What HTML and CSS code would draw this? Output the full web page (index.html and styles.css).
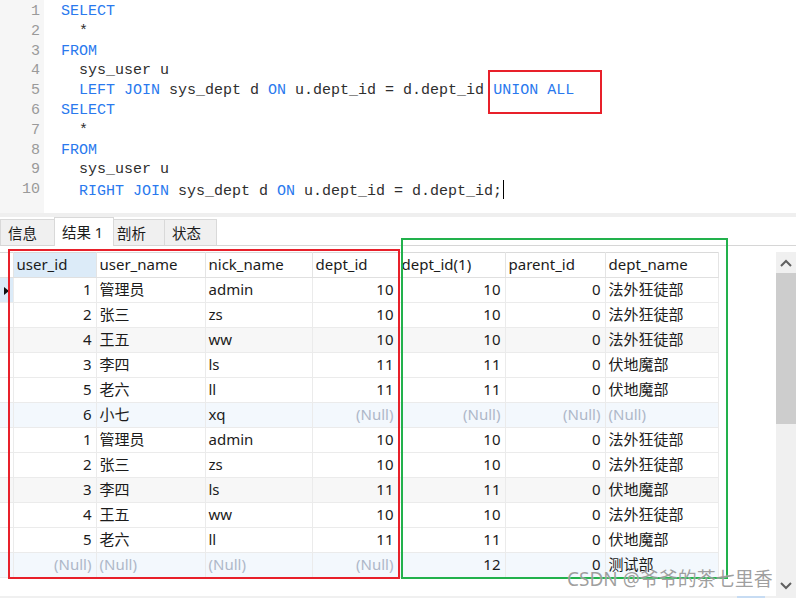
FILE: index.html
```html
<!DOCTYPE html>
<html lang="zh-CN">
<head>
<meta charset="utf-8">
<title>Query</title>
<link rel="stylesheet" href="styles.css">
</head>
<body>
<div class="app">
  <div class="editor">
    <div class="gutter">
      <div class="num">1</div><div class="num">2</div><div class="num">3</div><div class="num">4</div><div class="num">5</div>
      <div class="num">6</div><div class="num">7</div><div class="num">8</div><div class="num">9</div><div class="num">10</div>
    </div>
    <div class="code">
      <div class="ln"><span class="kw">SELECT</span></div>
      <div class="ln">  *</div>
      <div class="ln"><span class="kw">FROM</span></div>
      <div class="ln">  sys_user u</div>
      <div class="ln">  <span class="kw">LEFT JOIN</span> sys_dept d <span class="kw">ON</span> u.dept_id = d.dept_id <span class="kw">UNION ALL</span></div>
      <div class="ln"><span class="kw">SELECT</span></div>
      <div class="ln">  *</div>
      <div class="ln"><span class="kw">FROM</span></div>
      <div class="ln">  sys_user u</div>
      <div class="ln">  <span class="kw">RIGHT JOIN</span> sys_dept d <span class="kw">ON</span> u.dept_id = d.dept_id;<span class="caret"></span></div>
    </div>
  </div>
  <div class="band"></div>
  <div class="tabs">
    <div class="tab t1">信息</div>
    <div class="tab t2 active">结果 1</div>
    <div class="tab t3">剖析</div>
    <div class="tab t4">状态</div>
  </div>
  <div class="results">
    <div class="grid-wrap">
      <table class="grid">
        <colgroup>
          <col class="c-ind"><col class="c-uid"><col class="c-uname"><col class="c-nick"><col class="c-did"><col class="c-did1"><col class="c-pid"><col class="c-dname">
        </colgroup>
        <thead>
          <tr><th class="ind"></th><th class="sel">user_id</th><th>user_name</th><th>nick_name</th><th>dept_id</th><th>dept_id(1)</th><th>parent_id</th><th>dept_name</th></tr>
        </thead>
        <tbody>
          <tr><td class="ind cur"><span class="tri"></span></td><td class="n">1</td><td>管理员</td><td>admin</td><td class="n">10</td><td class="n">10</td><td class="n">0</td><td>法外狂徒部</td></tr>
          <tr><td class="ind"></td><td class="n">2</td><td>张三</td><td>zs</td><td class="n">10</td><td class="n">10</td><td class="n">0</td><td>法外狂徒部</td></tr>
          <tr class="grey"><td class="ind"></td><td class="n">4</td><td>王五</td><td>ww</td><td class="n">10</td><td class="n">10</td><td class="n">0</td><td>法外狂徒部</td></tr>
          <tr><td class="ind"></td><td class="n">3</td><td>李四</td><td>ls</td><td class="n">11</td><td class="n">11</td><td class="n">0</td><td>伏地魔部</td></tr>
          <tr><td class="ind"></td><td class="n">5</td><td>老六</td><td>ll</td><td class="n">11</td><td class="n">11</td><td class="n">0</td><td>伏地魔部</td></tr>
          <tr class="blue"><td class="ind"></td><td class="n">6</td><td>小七</td><td>xq</td><td class="n null">(Null)</td><td class="n null">(Null)</td><td class="n null">(Null)</td><td class="null">(Null)</td></tr>
          <tr><td class="ind"></td><td class="n">1</td><td>管理员</td><td>admin</td><td class="n">10</td><td class="n">10</td><td class="n">0</td><td>法外狂徒部</td></tr>
          <tr><td class="ind"></td><td class="n">2</td><td>张三</td><td>zs</td><td class="n">10</td><td class="n">10</td><td class="n">0</td><td>法外狂徒部</td></tr>
          <tr class="grey"><td class="ind"></td><td class="n">3</td><td>李四</td><td>ls</td><td class="n">11</td><td class="n">11</td><td class="n">0</td><td>伏地魔部</td></tr>
          <tr><td class="ind"></td><td class="n">4</td><td>王五</td><td>ww</td><td class="n">10</td><td class="n">10</td><td class="n">0</td><td>法外狂徒部</td></tr>
          <tr><td class="ind"></td><td class="n">5</td><td>老六</td><td>ll</td><td class="n">11</td><td class="n">11</td><td class="n">0</td><td>伏地魔部</td></tr>
          <tr class="blue"><td class="ind"></td><td class="n null">(Null)</td><td class="null">(Null)</td><td class="null">(Null)</td><td class="n null">(Null)</td><td class="n">12</td><td class="n">0</td><td>测试部</td></tr>
        </tbody>
      </table>
    </div>
    <div class="vscroll">
      <div class="sb-btn">
        <svg width="12" height="8" viewBox="0 0 12 8"><path d="M1 7 L6 2 L11 7" fill="none" stroke="#606060" stroke-width="2"/></svg>
      </div>
      <div class="sb-thumb"></div>
      <div class="sb-track"></div>
      <div class="sb-btn">
        <svg width="12" height="8" viewBox="0 0 12 8"><path d="M1 1 L6 6 L11 1" fill="none" stroke="#606060" stroke-width="2"/></svg>
      </div>
    </div>
  </div>
  <div class="hscroll"><div class="hs-thumb"></div></div>

  <div class="mark mark-union"></div>
  <div class="mark mark-left"></div>
  <div class="mark mark-right"></div>
  <div class="watermark">CSDN @爷爷的茶七里香</div>
</div>
</body>
</html>
```

FILE: styles.css
```css
* { box-sizing: border-box; }
html, body { margin: 0; padding: 0; background: #ffffff; }
.app {
  position: relative;
  width: 796px;
  height: 598px;
  overflow: hidden;
  display: flex;
  flex-direction: column;
  font-family: "Noto Sans", "Noto Sans CJK SC", sans-serif;
  color: #1b1b1b;
}

/* editor */
.editor {
  height: 213px;
  display: flex;
  flex-shrink: 0;
}
.gutter {
  width: 44px;
  background: #f6f6f6;
  padding-top: 2px;
  padding-right: 4px;
  text-align: right;
  font-family: "Liberation Mono", "DejaVu Sans Mono", monospace;
  font-size: 15px;
  color: #9a9a9a;
}
.num { height: 19.8px; line-height: 20px; }
.code {
  flex: 1;
  padding-top: 2px;
  padding-left: 17px;
  font-family: "Liberation Mono", "DejaVu Sans Mono", monospace;
  font-size: 15px;
  color: #2e2e2e;
}
.ln { height: 19.8px; line-height: 20px; white-space: pre; }
.kw { color: #2a79ee; }
.caret {
  display: inline-block;
  width: 1px;
  height: 19px;
  background: #000;
  vertical-align: -4px;
  margin-left: 1px;
}

.band { height: 4px; background: #efefef; flex-shrink: 0; }

/* tabs */
.tabs {
  height: 29px;
  display: flex;
  align-items: flex-end;
  border-bottom: 1px solid #d6d6d6;
  flex-shrink: 0;
  font-size: 14.5px;
}
.tab {
  height: 26px;
  line-height: 26px;
  background: #f0f0f0;
  border: 1px solid #d9d9d9;
  border-bottom: none;
  margin-right: -1px;
  padding-left: 7px;
  color: #1b1b1b;
}
.tab.active {
  height: 29px;
  line-height: 28px;
  background: #ffffff;
  margin-bottom: -1px;
  position: relative;
  padding-left: 7px;
}
.t1 { width: 55px; }
.t2 { width: 60px; }
.t3 { width: 52px; padding-left: 3px; }
.t4 { width: 53px; }

/* results */
.results {
  margin-top: 6px;
  height: 344px;
  display: flex;
  flex-shrink: 0;
}
.grid-wrap { width: 776px; overflow: hidden; }
.grid {
  width: 718px;
  table-layout: fixed;
  border-collapse: collapse;
  font-size: 15px;
}
.c-ind { width: 13px; }
.c-uid { width: 83px; }
.c-uname { width: 109px; }
.c-nick { width: 107px; }
.c-did { width: 86px; }
.c-did1 { width: 107px; }
.c-pid { width: 100px; }
.c-dname { width: 113px; }

.grid th, .grid td {
  height: 25px;
  padding: 0 3px 2px;
  line-height: 21px;
  border: 1px solid #ebebeb;
  white-space: nowrap;
  overflow: hidden;
  font-weight: normal;
  text-align: left;
}
.grid th {
  border-top: 1px solid #dadada;
  border-bottom: 1px solid #e0e0e0;
  border-right: 1px solid #e4e4e4;
}
.grid th.sel { background: #dcebf8; }
.grid .ind { padding: 0; border-left: none; }
.grid td.cur { background: #dcebf8; }
.tri {
  display: block;
  width: 0;
  height: 0;
  margin-left: 4px;
  margin-top: 1px;
  border-top: 4px solid transparent;
  border-bottom: 4px solid transparent;
  border-left: 5px solid #111;
}
.grid td.n { text-align: right; padding-right: 4px; }
.grid td.null { color: #aeb7c8; }
.grid tr.grey td { background: #f7f7f7; }
.grid tr.blue td { background: #f3f8fd; }

/* vertical scrollbar */
.vscroll {
  width: 20px;
  display: flex;
  flex-direction: column;
  background: #f0f0f0;
}
.sb-btn {
  height: 21px;
  display: flex;
  align-items: center;
  justify-content: center;
}
.sb-thumb { height: 151px; background: #cdcdcd; }
.sb-track { flex: 1; }

.hscroll {
  height: 2px;
  background: #f0f0f0;
  position: relative;
}
.hs-thumb {
  margin-left: 737px;
  width: 28px;
  height: 2px;
  background: #c7dcf3;
}

/* annotations */
.mark { position: absolute; border: 2px solid #e8202a; }
.mark-union { left: 488px; top: 70px; width: 114px; height: 44px; }
.mark-left { left: 8px; top: 249px; width: 392px; height: 330px; }
.mark-right { left: 401px; top: 238px; width: 327px; height: 341px; border-color: #22b14c; }

.watermark {
  position: absolute;
  left: 567px;
  top: 569px;
  font-family: "Noto Sans", "Noto Sans CJK SC", sans-serif;
  font-size: 19px;
  line-height: 20px;
  color: rgba(128, 128, 128, 0.75);
  text-shadow: 0 0 1px rgba(255, 255, 255, 0.8);
  white-space: nowrap;
}
```
